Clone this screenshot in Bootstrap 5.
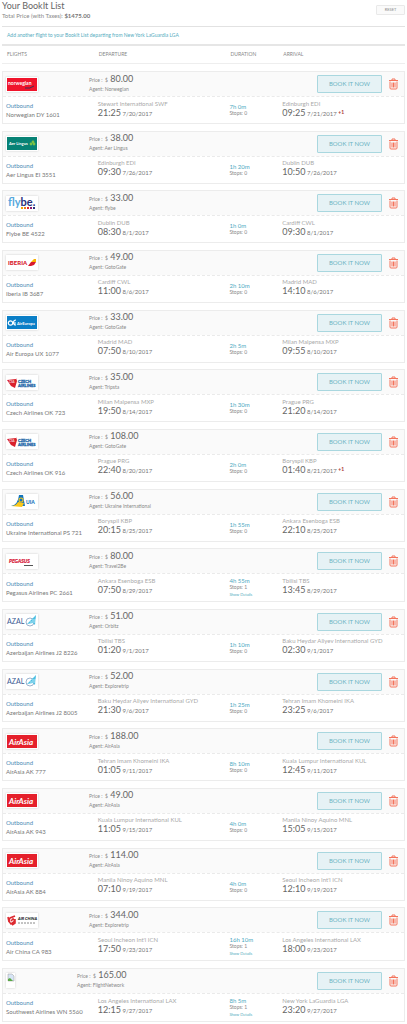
<!DOCTYPE html>
<html lang="en">
<head>
<meta charset="utf-8">
<meta name="viewport" content="width=device-width, initial-scale=1">
<title>Your BookIt List</title>
<link href="https://cdn.jsdelivr.net/npm/bootstrap@5.3.0/dist/css/bootstrap.min.css" rel="stylesheet">
<style>
  body { font-family: Lato, "Liberation Sans", sans-serif; font-size: 6px; line-height: 9px; color: #888; background: #fff; }
  a { text-decoration: none; color: #55acc0; }
  .page { padding: 0 2px 2px; }
  .page-title { font-size: 9px; line-height: 12px; color: #666; font-weight: 400; }
  .total { line-height: 8px; }
  .total strong { color: #777; }
  .btn-reset { font-size: 4px; line-height: 8px; width: 29px; padding: 0; margin-top: 5px; color: #888; background: #fafafa; border: 1px solid #e9e9e9; border-radius: 1px; }
  .add-link { font-size: 5px; line-height: 17px; padding-left: 5px; border-top: 1px solid #e2e2e2; border-bottom: 2px solid #e6e6e6; margin-top: 6px; }
  .cols { display: grid; grid-template-columns: 92fr 132fr 53fr 122fr; }
  .col-heads { font-size: 5px; line-height: 17px; padding-left: 5px; border-bottom: 1px solid #eee; color: #888; }
  .trips { padding-top: 7px; row-gap: 6px; }
  .trip { border: 1px solid #ececec; }
  .trip-head { height: 24px; background: #fafafa; padding: 0 6px 0 3px; }
  .trip-leg { min-height: 27px; padding-left: 3px; border-top: 1px dashed #eaeaea; }
  .trip-leg-long { min-height: 28px; }
  .tile { width: 32px; height: 15px; background: #fff; box-shadow: 0 0 2px #ccc; }
  .tile-empty { width: 9px; margin-right: 11px; }
  .offer { margin-left: 51px; padding-bottom: 1px; font-size: 5px; }
  .offer .amount { font-size: 9px; line-height: 10px; color: #666; }
  .offer .unit { font-size: 5px; color: #888; }
  .btn-book { width: 65px; height: 18px; padding: 0; font-size: 6px; line-height: 14px; color: #6cb3c3; background: #e6f2f5; border: 1px solid #a9d7df; border-radius: 1px; }
  .btn-book:hover { color: #fff; background: #6cb3c3; }
  .btn-trash { width: 9px; height: 12px; margin-left: 7px; padding: 0; border: 0; line-height: 0; }
  .bound { color: #4b8bb5; }
  .flight-no { color: #777; }
  .stop { padding-bottom: 2px; line-height: 7px; color: #aaa; }
  .when { line-height: 11px; color: #777; }
  .when .clock { font-size: 9px; color: #666; }
  .when sup { font-size: 5px; top: -2px; color: #a33; font-weight: 700; }
  .dur { font-size: 5px; line-height: 7px; }
  .dur .len { font-size: 6px; color: #4da9bf; }
  .dur .details { font-size: 4px; }
</style>
</head>
<body>
<svg class="d-none" aria-hidden="true">
  <symbol id="trash" viewBox="0 0 18 24"><g fill="none" stroke="#f4745c" stroke-width="2"><path d="M0 5h18M6 5V2h6v3M2 7v13q0 2 2 2h10q2 0 2-2V7M6 9v10M9 9v10M12 9v10"/></g></symbol>
  <symbol id="norwegian" viewBox="0 0 32 15"><path fill="#f0142b" d="M1 1h30v13H1z"/><text x="2" y="8" font-size="5" font-weight="700" fill="#fff">norwegian</text><path d="M19 11q5 1 9-2" fill="none" stroke="#3c3256"/></symbol>
  <symbol id="aerlingus" viewBox="0 0 32 15"><path fill="#078275" d="M1 1h30v13H1z"/><text x="3" y="9" font-size="4" font-weight="700" fill="#fff">Aer Lingus</text><g fill="#7ac143"><circle cx="25" cy="8" r="1.4"/><circle cx="27" cy="6" r="1.4"/><circle cx="28" cy="8" r="1.4"/></g></symbol>
  <symbol id="flybe" viewBox="0 0 32 15"><text x="2" y="10" font-size="11" font-weight="700" fill="#58a8dd">fly<tspan fill="#28307c">be.</tspan></text><path fill="#f5a800" d="M15 11h2v2h-2z"/><path fill="#ef7d1a" d="M18 11h2v2h-2z"/><path fill="#e3212f" d="M21 11h2v2h-2z"/><path fill="#8b1c6d" d="M24 11h2v2h-2z"/><path fill="#28307c" d="M27 11h2v2h-2z"/></symbol>
  <symbol id="iberia" viewBox="0 0 32 15"><text x="2" y="10" font-size="6" font-weight="900" fill="#d7192d">IBERIA</text><path fill="#d7192d" d="M22 11l3-4h5l-2 3-3 1z"/><path fill="#f9b000" d="M25 7l3-3h2v3z"/></symbol>
  <symbol id="aireuropa" viewBox="0 0 32 15"><path fill="#0b7fc7" d="M1 1h30v13H1z"/><g fill="none" stroke="#fff" stroke-width="1.200"><circle cx="4.500" cy="8" r="2.200"/><path d="M10 5a2.500 2.500 0 1 0 0 5M7 8h3"/></g><text x="11" y="10" font-size="4" font-weight="700" fill="#fff">AirEuropa</text></symbol>
  <symbol id="czech" viewBox="0 0 32 15"><path fill="#d9202c" d="M1 5l9-1V3l1 3-2 7-4-2-2-3z"/><text x="3" y="8" font-size="3" fill="#fff">CSA</text><g font-size="4" font-weight="900" fill="#1d67a8" stroke="#1d67a8" stroke-width=".3"><text x="12" y="8">CZECH</text><text x="12" y="12">AIRLINES</text></g></symbol>
  <symbol id="uia" viewBox="0 0 32 15"><path fill="#1374bd" d="M5 12q7-1 8-11h4l2 11z"/><path fill="#fbc719" d="M5 12q5 0 7-4l6 1-2 4z"/><circle cx="15" cy="6" r="2.500" fill="#fbc719"/><circle cx="15" cy="6" r="1.500" fill="#1374bd"/><text x="20" y="10" font-size="5" font-weight="900" fill="#1374bd">UIA</text></symbol>
  <symbol id="pegasus" viewBox="0 0 32 15"><text x="3" y="9" font-size="5" font-weight="900" font-style="italic" fill="#d81f3d" stroke="#d81f3d" stroke-width=".2">PEGASUS</text><path stroke="#555" d="M18 11.500h9"/></symbol>
  <symbol id="azal" viewBox="0 0 32 15"><text x="1" y="10" font-size="7" fill="#3a5b94">AZAL</text><circle cx="24" cy="8" r="4" fill="none" stroke="#9ab3ce"/><path fill="#49bfe3" d="M21 10l9-9-1 10-2-2z"/><path stroke="#fff" stroke-width=".6" d="M24 8h6M26 6h4"/></symbol>
  <symbol id="airasia" viewBox="0 0 32 15"><path fill="#e5202b" d="M1 1h30v13H1z"/><text x="3" y="11" font-size="8" font-weight="700" font-style="italic" fill="#fff">AirAsia</text></symbol>
  <symbol id="airchina" viewBox="0 0 32 15"><path fill="none" stroke="#dd2a30" stroke-width="1.600" d="M9 3L4 5q-2 3 1 6l4-3-2-2-2 2M9 6v4l-3 2M2 4l1 5"/><text x="12" y="7" font-size="4" font-weight="900" font-style="italic" fill="#222">AIR CHINA</text><path stroke="#888" stroke-dasharray="2 1" d="M12 10h18"/></symbol>
  <symbol id="broken" viewBox="0 0 9 15"><path fill="#d7e5f6" stroke="#999" stroke-width=".5" d="M2 1h4l2 2v5H2z"/><path fill="#5aa845" d="M2 8V6l2-1 3 3z"/></symbol>
</svg>

<main class="page container-fluid min-vh-100 d-flex flex-column">
  <header class="d-flex justify-content-between align-items-start">
    <div>
      <h1 class="page-title mb-0">Your BookIt List</h1>
      <p class="total mb-0">Total Price (with Taxes): <strong>$1475.00</strong></p>
    </div>
    <button type="button" class="btn btn-reset">RESET</button>
  </header>
  <div class="add-link"><a href="#">Add another flight to your BookIt List departing from New York LaGuardia LGA</a></div>
  <div class="cols col-heads"><span>FLIGHTS</span><span>DEPARTURE</span><span>DURATION</span><span>ARRIVAL</span></div>
  <section id="trips" class="trips flex-grow-1 d-flex flex-column justify-content-between" aria-label="Flights"></section>
</main>

<script>
  // logo | carrier | price | agent | flight | from | time | date | duration | stops | to | time | date | day shift
  const trips = `norwegian|Norwegian|80.00|Norwegian|Norwegian DY 1601|Stewart International SWF|21:25|7/20/2017|7h 0m|0|Edinburgh EDI|09:25|7/21/2017|+1
aerlingus|Aer Lingus|38.00|Aer Lingus|Aer Lingus EI 3551|Edinburgh EDI|09:30|7/26/2017|1h 20m|0|Dublin DUB|10:50|7/26/2017|
flybe|Flybe|33.00|flybe|Flybe BE 4522|Dublin DUB|08:30|8/1/2017|1h 0m|0|Cardiff CWL|09:30|8/1/2017|
iberia|Iberia|49.00|GotoGate|Iberia IB 3687|Cardiff CWL|11:00|8/6/2017|2h 10m|0|Madrid MAD|14:10|8/6/2017|
aireuropa|Air Europa|33.00|GotoGate|Air Europa UX 1077|Madrid MAD|07:50|8/10/2017|2h 5m|0|Milan Malpensa MXP|09:55|8/10/2017|
czech|Czech Airlines|35.00|Tripsta|Czech Airlines OK 723|Milan Malpensa MXP|19:50|8/14/2017|1h 30m|0|Prague PRG|21:20|8/14/2017|
czech|Czech Airlines|108.00|GotoGate|Czech Airlines OK 916|Prague PRG|22:40|8/20/2017|2h 0m|0|Boryspil KBP|01:40|8/21/2017|+1
uia|Ukraine International|56.00|Ukraine International|Ukraine International PS 721|Boryspil KBP|20:15|8/25/2017|1h 55m|0|Ankara Esenboga ESB|22:10|8/25/2017|
pegasus|Pegasus Airlines|80.00|Travel2Be|Pegasus Airlines PC 2661|Ankara Esenboga ESB|07:50|8/29/2017|4h 55m|1|Tbilisi TBS|13:45|8/29/2017|
azal|Azerbaijan Airlines|51.00|Orbitz|Azerbaijan Airlines J2 8226|Tbilisi TBS|01:20|9/1/2017|1h 10m|0|Baku Heydar Aliyev International GYD|02:30|9/1/2017|
azal|Azerbaijan Airlines|52.00|Exploretrip|Azerbaijan Airlines J2 8005|Baku Heydar Aliyev International GYD|21:30|9/6/2017|1h 25m|0|Tehran Imam Khomeini IKA|23:25|9/6/2017|
airasia|AirAsia|188.00|AirAsia|AirAsia AK 777|Tehran Imam Khomeini IKA|01:05|9/11/2017|8h 10m|0|Kuala Lumpur International KUL|12:45|9/11/2017|
airasia|AirAsia|49.00|AirAsia|AirAsia AK 943|Kuala Lumpur International KUL|11:05|9/15/2017|4h 0m|0|Manila Ninoy Aquino MNL|15:05|9/15/2017|
airasia|AirAsia|114.00|AirAsia|AirAsia AK 884|Manila Ninoy Aquino MNL|07:10|9/19/2017|4h 0m|0|Seoul Incheon Int'l ICN|12:10|9/19/2017|
airchina|Air China|344.00|Exploretrip|Air China CA 983|Seoul Incheon Int'l ICN|17:50|9/23/2017|16h 10m|1|Los Angeles International LAX|18:00|9/23/2017|
broken|Southwest Airlines|165.00|FlightNetwork|Southwest Airlines WN 5560|Los Angeles International LAX|12:15|9/27/2017|8h 5m|1|New York LaGuardia LGA|23:20|9/27/2017|`;

  const stop = (place, time, date, shift) => `<div class="stop"><div class="text-nowrap">${place}</div>
    <div class="when"><span class="clock">${time}</span> ${date}${shift ? ` <sup>${shift}</sup>` : ''}</div></div>`;

  document.getElementById('trips').innerHTML = trips.split('\n').map(line => {
    const [logo, carrier, price, agent, flight, from, t1, d1, len, stops, to, t2, d2, shift] = line.split('|');
    return `<article class="trip">
      <div class="trip-head d-flex align-items-center">
        <svg class="tile ${logo === 'broken' ? 'tile-empty' : ''}" role="img" aria-label="${carrier}"><use href="#${logo}"/></svg>
        <div class="offer flex-grow-1"><div class="amount"><span class="unit">Price : &nbsp;$</span> ${price}</div><div>Agent: ${agent}</div></div>
        <button type="button" class="btn btn-book">BOOK IT NOW</button>
        <button type="button" class="btn btn-trash" aria-label="Remove ${flight}"><svg width="9" height="12"><use href="#trash"/></svg></button>
      </div>
      <div class="trip-leg cols align-items-center ${stops > 0 ? 'trip-leg-long' : ''}">
        <div class="text-nowrap"><div class="bound">Outbound</div><div class="flight-no">${flight}</div></div>
        ${stop(from, t1, d1)}
        <div class="dur"><div class="len">${len}</div><div>Stops: ${stops}</div>${stops > 0 ? '<a class="details d-block" href="#">Show Details</a>' : ''}</div>
        ${stop(to, t2, d2, shift)}
      </div>
    </article>`;
  }).join('');
</script>
<script src="https://cdn.jsdelivr.net/npm/bootstrap@5.3.0/dist/js/bootstrap.bundle.min.js"></script>
</body>
</html>
